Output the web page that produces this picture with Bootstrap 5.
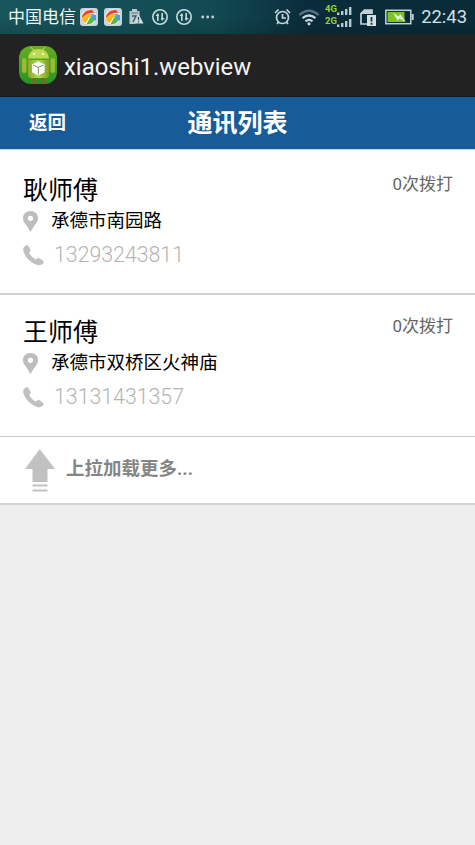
<!DOCTYPE html>
<html lang="zh-CN">
<head>
<meta charset="utf-8">
<meta name="viewport" content="width=device-width, initial-scale=1">
<title>通讯列表</title>
<link href="https://cdn.jsdelivr.net/npm/bootstrap@5.3.0/dist/css/bootstrap.min.css" rel="stylesheet">
<style>
body{font-family:Roboto,"Noto Sans CJK SC",sans-serif;background:#eee;color:#000;min-height:845px;overflow:hidden}
svg{display:block;flex:none}
.status-bar{height:34px;padding:0 8px 0 8px;background:linear-gradient(180deg,rgba(0,0,0,0) 50%,rgba(0,0,0,.12)),linear-gradient(90deg,#17565c,#124a52 45%,#0a2c3a 65%,#0a2b38);color:#dcebed}
.carrier{font-size:17px;line-height:34px;width:68px;white-space:nowrap;color:#f0f7f8}
.clock{font-size:18.4px;line-height:34px;margin-left:7px;color:#d3e0e4}
.app-bar{height:63px;background:#222;padding-left:19px;border-bottom:1px solid #1b1b1b}
.app-title{font-size:23.9px;line-height:58px;padding-top:4px;color:#f4f4f4;margin-left:7px}
.page-head{height:53px;background:#175b98;color:#fff;border-bottom:1px solid #c5d6e4;display:grid;grid-template-columns:1fr auto 1fr;align-items:center}
.back-link{font-size:18.5px;font-weight:700;padding-left:29px;color:#fff;line-height:51px}
.head-title{font-size:25px;font-weight:700;line-height:50px;margin:0;padding-top:1px}
.contact{height:142px;padding:24px 22px 0 23px;background:#fff;border-bottom:1px solid #c9c9c9}
.contact:first-child{height:145px;padding-top:27px;border-bottom:2px solid #d2d2d2}
.who{font-size:25px;line-height:28px;font-weight:400;margin:0}
.calls{font-size:17px;line-height:18px;color:#666;margin-top:-2px}
.addr{font-size:18.5px;line-height:32px;margin-left:13px}
.tel{font-size:21.3px;line-height:36px;font-weight:300;color:#b4b4b4;margin-left:10px}
.more{height:68px;background:#fff;border-bottom:2px solid #d2d2d2;padding-left:25px}
.more-text{font-size:18.5px;font-weight:700;color:#858585;margin-left:11px;line-height:62px;padding-bottom:2px}
</style>
<script src="https://cdn.jsdelivr.net/npm/bootstrap@5.3.0/dist/js/bootstrap.bundle.min.js"></script>
</head>
<body>
<svg width="0" height="0" class="position-absolute">
<defs>
<symbol id="swirl" viewBox="0 0 18 18"><rect width="18" height="18" rx="3" fill="#c9d3df"/><circle cx="9" cy="9" r="7.7" fill="#edf0ed"/><path d="M2 8Q5 1 12 2L15 5Q8 4 2 10z" fill="#e7442e"/><path d="M2 10Q7 5 13 6L6 15Q2 14 2 10z" fill="#f7b824"/><path d="M12 6L16 7Q17 11 15 13L11 11z" fill="#4b9de0"/><path d="M11 8L14 13Q11 17 6 16z" fill="#57b947"/><path d="M10 9L6 16" stroke="#fff"/></symbol>
<symbol id="data" viewBox="0 0 18 18"><g fill="none" stroke="#c7dadd" stroke-width="1.6"><circle cx="9" cy="9" r="7.2"/><path d="M6.8 13V6M11.2 5v7"/></g><path d="M4.4 8L7 5l1 3zM10 10h3.8L11 13z" fill="#c7dadd"/></symbol>
<symbol id="pin" viewBox="0 0 15 21"><path fill="#bdbdbd" fill-rule="evenodd" d="M7.5 0C3 0 0 3 0 7.2C0 10 1.5 12 3.5 14.5L7.5 21L11.5 14.5C13.5 12 15 10 15 7.2C15 3 12 0 7.5 0zM7.5 4.7a2.6 2.6 0 1 1 0 5.2a2.6 2.6 0 0 1 0-5.2z"/></symbol>
<symbol id="phone" viewBox="0 0 22 22"><path fill="#c0c0c0" d="M1 2.2L3.5.3Q5-.2 6 1.5L7.8 5Q8.3 6.5 6.5 8.2Q8.5 13 13.4 15.2L15.3 13.8Q16.3 13.4 17.5 14L21.2 16.8Q22.3 18 21 19.4Q19 21.8 15 21Q10 19.8 5.5 15.3Q1.5 11 .3 6Q0 3.5 1 2.2z"/></symbol>
</defs>
</svg>

<div class="status-bar d-flex align-items-center">
<span class="carrier">中国电信</span>
<svg width="18" height="18" class="ms-1"><use href="#swirl"/></svg>
<svg width="18" height="18" style="margin-left:6px"><use href="#swirl"/></svg>
<svg width="16" height="18" viewBox="0 0 16 18" style="margin-left:6px"><path d="M4 1h5v2h2.5v4L7 16H1.5V3H4z" fill="#b9c9cd"/><path d="M3 5h7" stroke="#56747b"/><path d="M4 8h4l-3 6" fill="none" stroke="#365c63" stroke-width="1.3"/><path d="M10.5 6l5 9.5h-9z" fill="#d3dfe1"/><path d="M10.5 9v3.3m0 1v1.3" stroke="#285159" stroke-width="1.3"/></svg>
<svg width="18" height="18" style="margin-left:7px"><use href="#data"/></svg>
<svg width="18" height="18" style="margin-left:6px"><use href="#data"/></svg>
<svg width="14" height="4" viewBox="0 0 14 4" style="margin-left:8px" fill="#c3d7da"><circle cx="1.7" cy="2" r="1.4"/><circle cx="6.7" cy="2" r="1.4"/><circle cx="11.7" cy="2" r="1.4"/></svg>
<div class="ms-auto d-flex align-items-center">
<svg width="17" height="18" viewBox="0 0 17 18" fill="none" stroke="#c7d8dd" stroke-width="1.7"><circle cx="8.5" cy="9.5" r="6"/><path d="M8.5 6v4H12M1 5l3.5-3.5M16 5l-3.5-3.5M4.5 14L3 16M12.5 14l1.5 2"/></svg>
<svg width="22" height="17" viewBox="0 0 22 17" fill="none" stroke="#c7d8dd" stroke-width="2.2" style="margin-left:7px"><path d="M1.3 6Q11-2.5 20.7 6" stroke="#58747e"/><path d="M4.5 9.2Q11 3.8 17.5 9.2M7.5 12.3Q11 9.5 14.5 12.3"/><circle cx="11" cy="14.8" r="1.6" fill="#c7d8dd" stroke="none"/></svg>
<svg width="28" height="26" viewBox="0 0 28 26" style="margin-left:5px"><g fill="#92d52c" font-family="Roboto" font-size="9.5" font-weight="700"><text x="0" y="8">4G</text><text x="0" y="20">2G</text></g><path d="M13.2 11v-2.5M17.2 11V7M21.2 11V5M25.2 11V3M13.2 23v-2.5M17.2 23V19M21.2 23V17M25.2 23V15" stroke="#b9cad0" stroke-width="2.4"/></svg>
<svg width="16" height="17" viewBox="0 0 16 17" style="margin-left:7px"><path d="M12 5V1H4.5L1 4.5V15h6" fill="none" stroke="#c3d1d6" stroke-width="1.7"/><path d="M1 4l3-3h8v4H1z" fill="#c3d1d6"/><rect x="7" y="6" width="9" height="11" fill="#d5dfe2"/><path d="M11.5 8v4.5m0 1.3v2" stroke="#17333e" stroke-width="1.8"/></svg>
<svg width="29" height="16" viewBox="0 0 29 16" style="margin-left:9px"><rect x=".8" y="1.3" width="25" height="13.4" fill="none" stroke="#c3d1d6" stroke-width="1.5"/><path d="M27.7 5v6" stroke="#c3d1d6" stroke-width="2"/><path d="M2.5 3h17v10h-17z" fill="#7fc225"/><path d="M8 4l6 3.5 1-2.5 6 8-7-3.5-1 2.5z" fill="#e4eee5"/></svg>
<span class="clock">22:43</span>
</div>
</div>

<div class="app-bar d-flex align-items-center">
<svg width="38" height="38" viewBox="0 0 38 38"><defs><linearGradient id="leaf" x2="0" y2="1"><stop stop-color="#68ab23"/><stop offset="1" stop-color="#269423"/></linearGradient><linearGradient id="droid"><stop stop-color="#87aa2b"/><stop offset=".5" stop-color="#b9d64b"/><stop offset="1" stop-color="#809f24"/></linearGradient></defs>
<rect width="38" height="38" rx="12" fill="url(#leaf)"/><path d="M12 1l3 4M26 1l-3 4" stroke="#b5d34c" stroke-width="1.2"/><path d="M9 12.5Q10 3 19.5 3T30 12.5z" fill="#bddb50"/><circle cx="15" cy="8" r="1" fill="#fff"/><circle cx="24" cy="8" r="1" fill="#fff"/><path d="M9 14h21v15q0 3-3 3H12q-3 0-3-3z" fill="url(#droid)"/><rect x="3" y="12" width="4.5" height="15" rx="2.2" fill="#9aba36"/><rect x="31.5" y="12" width="4.5" height="15" rx="2.2" fill="#9aba36"/><path d="M13 32h4v5h-4zM22 32h4v5h-4z" fill="#716c29"/><path d="M19.3 15.5l6.3 2.8v7.9l-6.3 3.3-6.3-3.3v-7.9z" fill="#fff"/><path d="M14 19l5.3 2.3L24.6 19M19.3 21.3V28.5" fill="none" stroke="#7f8d50" stroke-width="1"/></svg>
<span class="app-title">xiaoshi1.webview</span>
</div>

<header class="page-head">
<a class="back-link text-decoration-none" href="#">返回</a>
<h1 class="head-title">通讯列表</h1>
</header>

<main>
<section class="contact">
<div class="d-flex justify-content-between"><h2 class="who">耿师傅</h2><span class="calls">0次拨打</span></div>
<div class="d-flex align-items-center"><svg width="15" height="21"><use href="#pin"/></svg><span class="addr">承德市南园路</span></div>
<div class="d-flex align-items-center"><svg width="21" height="21"><use href="#phone"/></svg><span class="tel">13293243811</span></div>
</section>
<section class="contact">
<div class="d-flex justify-content-between"><h2 class="who">王师傅</h2><span class="calls">0次拨打</span></div>
<div class="d-flex align-items-center"><svg width="15" height="21"><use href="#pin"/></svg><span class="addr">承德市双桥区火神庙</span></div>
<div class="d-flex align-items-center"><svg width="21" height="21"><use href="#phone"/></svg><span class="tel">13131431357</span></div>
</section>
<div class="more d-flex align-items-center">
<svg width="30" height="43" viewBox="0 0 30 43"><path d="M14.7 0L30 20h-7.5v13h-15V20H0zM7.5 35.5h15v2h-15zM7.5 40.5h15v2h-15z" fill="#c1c1c1"/></svg>
<span class="more-text">上拉加载更多...</span>
</div>
</main>
</body>
</html>
